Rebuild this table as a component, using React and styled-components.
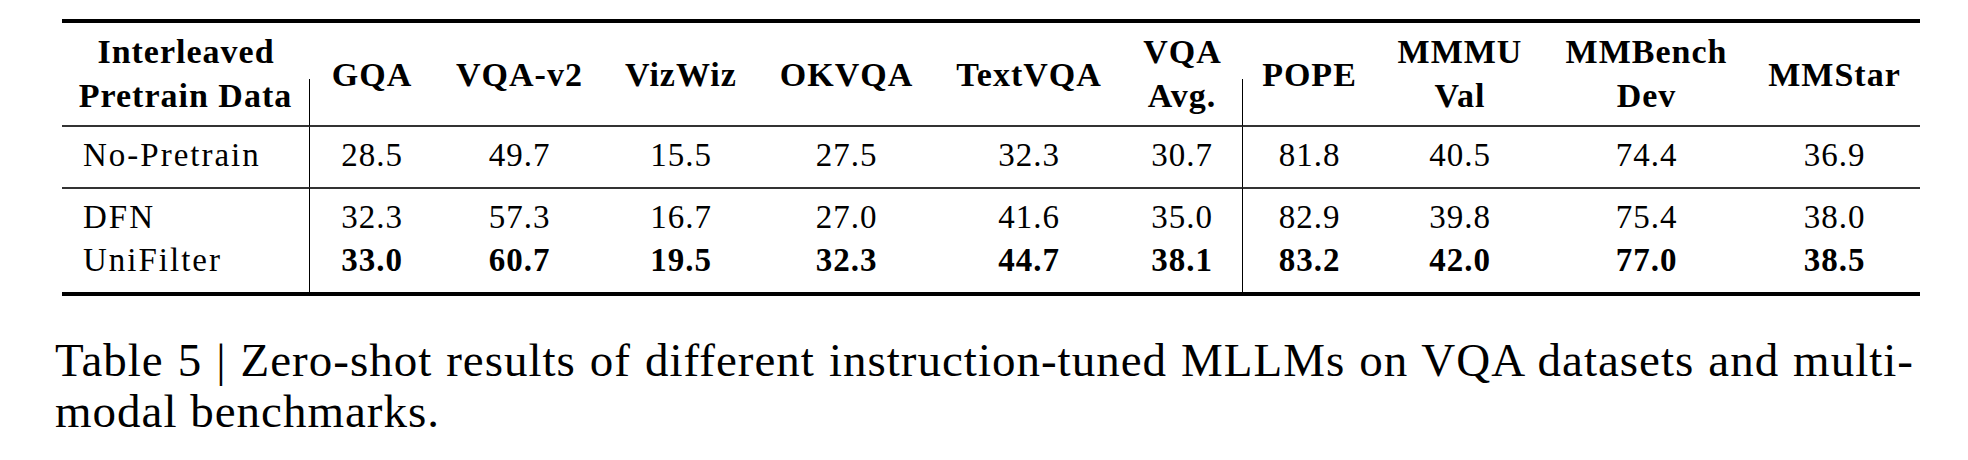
import React from "react";
import styled, { createGlobalStyle } from "styled-components";

const GlobalStyle = createGlobalStyle`
  html, body {
    margin: 0;
    padding: 0;
    background: #fff;
  }
  body {
    font-family: "Liberation Serif", "Times New Roman", serif;
    color: #000;
  }
`;

const Page = styled.div`
  display: flex;
  flex-direction: column;
  padding-top: 19px;
  width: 1968px;
`;

const Table = styled.table`
  border-collapse: separate;
  border-spacing: 0;
  table-layout: fixed;
  width: 1858px;
  margin-left: 62px;
  font-size: 33px;
  letter-spacing: 1px;
  line-height: 43px;
`;

const Col = styled.col`
  width: ${(p) => p.$w}px;
`;

const HeadCell = styled.th`
  font-weight: bold;
  font-size: 34px;
  text-align: center;
  white-space: nowrap;
  padding: 0;
  ${(p) =>
    p.$part === "top" &&
    `
    border-top: 4px solid #000;
    padding: 7px 0 6px;
    vertical-align: top;
  `}
  ${(p) =>
    p.$part === "bottom" &&
    `
    border-bottom: 2px solid #333;
    padding: 0 0 12px;
    line-height: 34px;
    vertical-align: top;
  `}
  ${(p) =>
    p.$part === "span" &&
    `
    border-top: 4px solid #000;
    border-bottom: 2px solid #333;
    vertical-align: middle;
  `}
  border-right: ${(p) => (p.$divider ? "1px solid #000" : "none")};
`;

const Group = styled.tbody`
  & > tr:first-child > td {
    padding-top: 7px;
  }
  & > tr:last-child > td {
    padding-bottom: 10px;
  }
  & + & > tr:first-child > td {
    border-top: 2px solid #333;
  }
  &:last-child > tr:last-child > td {
    border-bottom: 4px solid #000;
  }
`;

const Cell = styled.td`
  padding: 0;
  white-space: nowrap;
  text-align: ${(p) => (p.$label ? "left" : "center")};
  padding-left: ${(p) => (p.$label ? "21px" : "0")};
  letter-spacing: ${(p) => (p.$label ? "2px" : "1px")};
  font-weight: ${(p) => (p.$bold ? "bold" : "normal")};
  border-right: ${(p) => (p.$divider ? "1px solid #000" : "none")};
`;

const Caption = styled.div`
  margin: 39px 0 0 55px;
  width: 1859px;
  font-size: 47px;
  line-height: 51px;
  letter-spacing: 1px;
`;

const CaptionLine = styled.div`
  text-align: ${(p) => (p.$justify ? "justify" : "left")};
  text-align-last: ${(p) => (p.$justify ? "justify" : "auto")};
  white-space: ${(p) => (p.$justify ? "normal" : "nowrap")};
`;

const widths = [248, 124, 171, 152, 179, 186, 121, 133, 168, 205, 171];

// value columns followed by a vertical rule
const dividers = [6];

const groups = [
  [{ name: "No-Pretrain", values: ["28.5", "49.7", "15.5", "27.5", "32.3", "30.7", "81.8", "40.5", "74.4", "36.9"] }],
  [
    { name: "DFN", values: ["32.3", "57.3", "16.7", "27.0", "41.6", "35.0", "82.9", "39.8", "75.4", "38.0"] },
    { name: "UniFilter", best: true, values: ["33.0", "60.7", "19.5", "32.3", "44.7", "38.1", "83.2", "42.0", "77.0", "38.5"] },
  ],
];

export default function App() {
  return (
    <Page>
      <GlobalStyle />
      <Table>
        <colgroup>
          {widths.map((w, i) => (
            <Col key={i} $w={w} />
          ))}
        </colgroup>
        <thead>
          <tr>
            <HeadCell $part="top">Interleaved</HeadCell>
            <HeadCell $part="span" rowSpan={2}>GQA</HeadCell>
            <HeadCell $part="span" rowSpan={2}>VQA-v2</HeadCell>
            <HeadCell $part="span" rowSpan={2}>VizWiz</HeadCell>
            <HeadCell $part="span" rowSpan={2}>OKVQA</HeadCell>
            <HeadCell $part="span" rowSpan={2}>TextVQA</HeadCell>
            <HeadCell $part="top">VQA</HeadCell>
            <HeadCell $part="span" rowSpan={2}>POPE</HeadCell>
            <HeadCell $part="top">MMMU</HeadCell>
            <HeadCell $part="top">MMBench</HeadCell>
            <HeadCell $part="span" rowSpan={2}>MMStar</HeadCell>
          </tr>
          <tr>
            <HeadCell $part="bottom" $divider>Pretrain Data</HeadCell>
            <HeadCell $part="bottom" $divider>Avg.</HeadCell>
            <HeadCell $part="bottom">Val</HeadCell>
            <HeadCell $part="bottom">Dev</HeadCell>
          </tr>
        </thead>
        {groups.map((rows, g) => (
          <Group key={g}>
            {rows.map((row) => (
              <tr key={row.name}>
                <Cell $label $divider>{row.name}</Cell>
                {row.values.map((v, i) => (
                  <Cell key={i} $bold={row.best} $divider={dividers.includes(i + 1)}>
                    {v}
                  </Cell>
                ))}
              </tr>
            ))}
          </Group>
        ))}
      </Table>
      <Caption>
        <CaptionLine $justify>
          Table 5 | Zero-shot results of different instruction-tuned MLLMs on VQA datasets and multi-
        </CaptionLine>
        <CaptionLine>modal benchmarks.</CaptionLine>
      </Caption>
    </Page>
  );
}
